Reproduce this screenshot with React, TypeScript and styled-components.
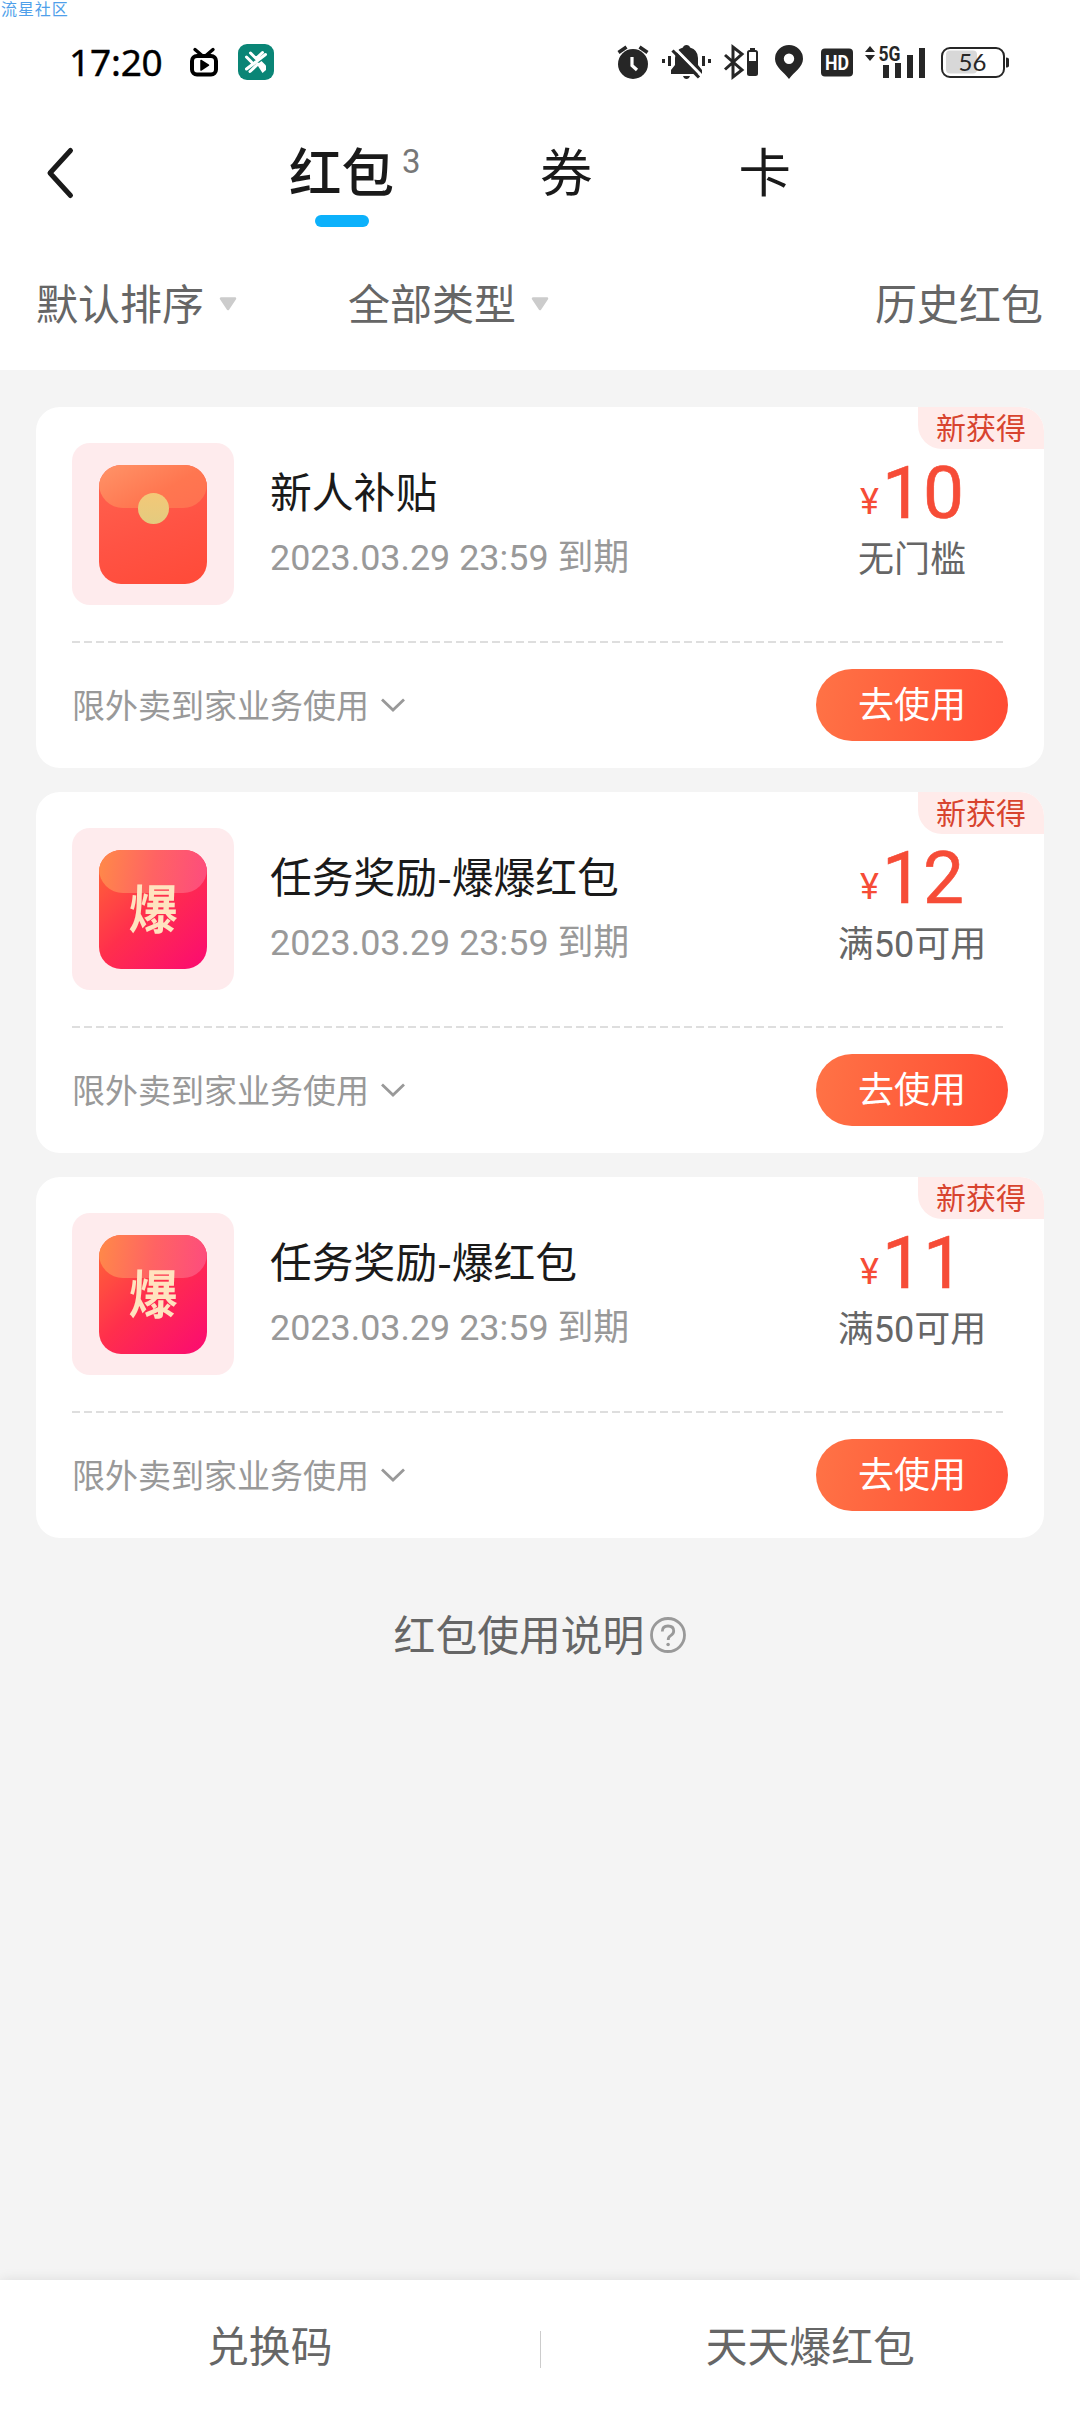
import React from 'react';
import styled, { createGlobalStyle } from 'styled-components';

const CJK = "'Noto Sans CJK SC', sans-serif";
const MIXED = "Roboto, 'Noto Sans CJK SC', sans-serif";

const GlobalStyle = createGlobalStyle`
  * { box-sizing: border-box; }
  body { margin: 0; background: #f4f4f4; font-family: ${CJK}; }
  svg { display: block; flex: none; overflow: visible; }
`;

const Screen = styled.div`
  position: relative;
  display: flex;
  flex-direction: column;
  width: 1080px;
  height: 2412px;
  background: #f4f4f4;
`;

const Watermark = styled.span`
  position: absolute;
  top: 0;
  left: 1px;
  font-size: 16px;
  line-height: 16px;
  letter-spacing: 0.9px;
  color: #4f9fea;
`;

const Header = styled.header`
  height: 370px;
  background: #fff;
`;

const StatusBar = styled.div`
  display: flex;
  align-items: center;
  justify-content: space-between;
  height: 124px;
  padding: 0 71px 0 69px;
`;

const StatusLeft = styled.div`
  display: flex;
  align-items: center;
`;

const Clock = styled.span`
  width: 121px;
  font: 37px/40px 'Noto Sans', sans-serif;
  letter-spacing: -0.2px;
  -webkit-text-stroke: 0.4px #000;
  color: #000;
`;

const AppIcons = styled.div`
  display: flex;
  align-items: center;
  gap: 20px;
`;

const StatusRight = styled.div`
  display: flex;
  align-items: center;
  color: #262626;
`;

const StatusIcon = styled.svg<{ $gap: number }>`
  margin-left: ${(p) => p.$gap}px;
`;

const Nav = styled.nav`
  display: flex;
  height: 114px;
  padding: 18px 0 0 47px;
`;

const Back = styled.svg`
  margin: 6px 216px 0 0;
`;

const Tabs = styled.div`
  display: flex;
  gap: 146px;
`;

const Tab = styled.div<{ $active?: boolean }>`
  position: relative;
  display: flex;
  flex-direction: column;
  align-items: center;
  font-size: 52.5px;
  font-weight: ${(p) => (p.$active ? 500 : 400)};
  line-height: 54px;
  color: #1a1a1a;
`;

const TabBar = styled.i`
  width: 54px;
  height: 12px;
  margin-top: 19px;
  border-radius: 6px;
  background: #0cb1fb;
`;

const TabCount = styled.sup`
  position: absolute;
  left: 113px;
  top: 0;
  font: 33px/40px Roboto, sans-serif;
  color: #777;
`;

const Filters = styled.div`
  display: flex;
  align-items: center;
  height: 132px;
  padding: 0 37px 0 36px;
  font-size: 42px;
  line-height: 60px;
  color: #666;
`;

const Filter = styled.div`
  display: flex;
  align-items: center;
  gap: 15px;
  width: 312px;
`;

const Label = styled.span`
  padding-bottom: 4px;
`;

const History = styled.div`
  margin-left: auto;
  padding-bottom: 4px;
`;

const List = styled.main`
  display: flex;
  flex: 1;
  flex-direction: column;
  gap: 24px;
  padding: 37px 36px 0;
`;

const Card = styled.section`
  position: relative;
  height: 361px;
  padding: 36px;
  border-radius: 24px;
  background: #fff;
`;

const NewBadge = styled.span`
  position: absolute;
  top: 0;
  right: 0;
  width: 126px;
  height: 42px;
  border-radius: 0 24px 0 24px;
  background: #ffebea;
  color: #d8442f;
  font-size: 30px;
  line-height: 39px;
  text-align: center;
`;

const CardTop = styled.div`
  display: flex;
  height: 200px;
  margin-right: 5px;
  padding-bottom: 35px;
  background: repeating-linear-gradient(90deg, #dedede 0 8px, transparent 8px 12px) left bottom / 100% 2px no-repeat;
`;

const Thumb = styled.div`
  display: flex;
  align-items: center;
  justify-content: center;
  width: 162px;
  height: 162px;
  border-radius: 18px;
  background: #feebed;
`;

const Packet = styled.div<{ $burst?: boolean }>`
  position: relative;
  display: flex;
  align-items: center;
  justify-content: center;
  width: 108px;
  height: 119px;
  border-radius: 22px;
  overflow: hidden;
  background: ${(p) =>
    p.$burst
      ? 'linear-gradient(135deg, #ff6a35 0%, #ff2f4c 48%, #fb0a72 100%)'
      : 'linear-gradient(160deg, #ff6450 0%, #ff5344 55%, #ff4a38 100%)'};
`;

const Flap = styled.i<{ $burst?: boolean }>`
  position: absolute;
  inset: 0 0 auto;
  height: 43px;
  border-radius: 0 0 24px 24px;
  background: ${(p) =>
    p.$burst
      ? 'linear-gradient(100deg, #ff8a48 0%, #ff6363 50%, #fd4b7e 100%)'
      : 'linear-gradient(150deg, #ff9468 0%, #ff7650 60%, #ff7050 100%)'};
`;

const Seal = styled.i`
  position: absolute;
  top: 28px;
  left: 39px;
  width: 31px;
  height: 31px;
  border-radius: 50%;
  background: linear-gradient(#f4c877, #e3cb7f);
`;

const BurstMark = styled.span`
  position: relative;
  padding-bottom: 5px;
  font-size: 53px;
  font-weight: 700;
  line-height: 53px;
  color: #ffe3bf;
  transform: scaleX(0.92) skewX(-2deg);
`;

const Info = styled.div`
  display: flex;
  flex: 1;
  flex-direction: column;
  padding: 17px 0 0 36px;
`;

const Title = styled.h2`
  margin: 0;
  font-size: 41.8px;
  font-weight: 400;
  line-height: 60px;
  color: #1a1a1a;
`;

const Expiry = styled.p`
  margin: 11px 0 0;
  font: 35.9px/54px ${MIXED};
  color: #999;
`;

const Value = styled.div`
  display: flex;
  flex-direction: column;
  align-items: center;
  width: 192px;
  margin-right: -5px;
`;

const Amount = styled.div`
  display: flex;
  gap: 3px;
  height: 93px;
  font-family: Roboto, sans-serif;
  color: #f64c37;
`;

const Currency = styled.span`
  padding-top: 36px;
  font-size: 36px;
  line-height: 46px;
`;

const Figure = styled.strong`
  padding-top: 5px;
  font-size: 73px;
  font-weight: 400;
  line-height: 90px;
  -webkit-text-stroke: 0.6px #f64c37;
`;

const Threshold = styled.span`
  font: 36px/48px ${MIXED};
  color: #666;
`;

const CardBottom = styled.div`
  display: flex;
  align-items: center;
  justify-content: space-between;
  height: 124px;
`;

const Scope = styled.div`
  display: flex;
  align-items: center;
  gap: 11px;
  padding-bottom: 2px;
  font-size: 33px;
  line-height: 48px;
  color: #999;
`;

const UseButton = styled.button`
  width: 192px;
  height: 72px;
  padding: 0 0 7px;
  border: 0;
  border-radius: 36px;
  background: linear-gradient(100deg, #ff7346, #ff4b33);
  color: #fff;
  font: 36px/60px ${CJK};
`;

const Help = styled.div`
  display: flex;
  align-items: center;
  justify-content: center;
  gap: 6px;
  margin-top: 41px;
  font-size: 41.8px;
  line-height: 60px;
  color: #666;
`;

const Footer = styled.footer`
  display: flex;
  align-items: center;
  height: 132px;
  background: #fff;
  box-shadow: 0 0 12px rgba(0, 0, 0, 0.1);
`;

const FooterItem = styled.div`
  flex: 1;
  padding-bottom: 5px;
  font-size: 41.8px;
  line-height: 60px;
  text-align: center;
  color: #666;
`;

const Divider = styled.i`
  width: 1px;
  height: 37px;
  margin: 6px 0 0;
  background: #ccc;
`;

const coupons = [
  { title: '新人补贴', amount: '10', threshold: '无门槛', burst: false },
  { title: '任务奖励-爆爆红包', amount: '12', threshold: '满50可用', burst: true },
  { title: '任务奖励-爆红包', amount: '11', threshold: '满50可用', burst: true },
];

const Caret = () => (
  <svg width="18" height="14" viewBox="0 0 18 14">
    <path d="M2 1.5h14L9 12z" fill="#ccc" stroke="#ccc" strokeWidth="2.5" strokeLinejoin="round" />
  </svg>
);

const StatusIcons = () => (
  <StatusRight>
    <StatusIcon $gap={0} width="32" height="34" viewBox="0 0 32 34">
      <circle cx="16" cy="19" r="15" fill="currentColor" />
      <path d="M1.5 7.5 9.5 2M30.500 7.500 22.500 2" stroke="currentColor" strokeWidth="3.600" />
      <path d="M15 12v8.500l5 4.500" stroke="#fff" strokeWidth="3.200" fill="none" />
    </StatusIcon>
    <StatusIcon $gap={13} width="49" height="34" viewBox="0 0 49 34">
      <path d="M9 29v-4l4-5v-7q0-8 8-10.500Q21.500 0 24.500 0t3.500 2.500q8 2.500 8 10.500v7l4 5v4zM21 31h7q-1 3-3.500 3T21 31z" fill="currentColor" />
      <path d="M12 2.500 39 30" stroke="#fff" strokeWidth="3" />
      <path d="M10.500 5.500 37 32.500" stroke="currentColor" strokeWidth="3.200" />
      <path d="M1.500 14v4M7.500 11v10M41.500 11v10M47.500 14v4" stroke="currentColor" strokeWidth="3" />
    </StatusIcon>
    <StatusIcon $gap={13} width="34" height="34" viewBox="0 0 34 34">
      <path d="M1 10 18 25 9 32V2l9 7L1 24.500" stroke="currentColor" strokeWidth="3" fill="none" />
      <path d="M26 3h5v2h-5z" fill="currentColor" />
      <rect x="24" y="6" width="9" height="24" rx="1.500" stroke="currentColor" strokeWidth="2" fill="none" />
      <path d="M24 16h9v14h-9z" fill="currentColor" />
    </StatusIcon>
    <StatusIcon $gap={17} width="28" height="34" viewBox="0 0 28 34">
      <path fillRule="evenodd" fill="currentColor" d="M14 0a14 14 0 0 1 14 14c0 8-9 13-14 20C9 27 0 22 0 14A14 14 0 0 1 14 0zm0 8.500a5.200 5.200 0 1 0 0 10.400 5.200 5.200 0 0 0 0-10.400z" />
    </StatusIcon>
    <StatusIcon $gap={18} width="32" height="34" viewBox="0 0 32 34">
      <rect y="3.500" width="32" height="28" rx="4" fill="currentColor" />
      <text x="16" y="25" textAnchor="middle" textLength="24" lengthAdjust="spacingAndGlyphs" fontFamily="Roboto" fontWeight="700" fontSize="21" fill="#fff">HD</text>
    </StatusIcon>
    <StatusIcon $gap={12} width="60" height="34" viewBox="0 0 60 34">
      <path d="M0 7 5 1l5 6zM0 10h10l-5 6z" fill="currentColor" />
      <path d="M18 20h6v13h-6zM30 18h6v15h-6zM42 10h6v23h-6zM54 3h6v30h-6z" fill="currentColor" />
      <text x="13.500" y="15.500" textLength="22" lengthAdjust="spacingAndGlyphs" fontFamily="Roboto" fontWeight="700" fontSize="20" fill="currentColor">5G</text>
    </StatusIcon>
    <StatusIcon $gap={16} width="68" height="34" viewBox="0 0 68 34">
      <rect x="5" y="5.500" width="31" height="23" rx="4" fill="#d8d8d8" />
      <rect x="1" y="3" width="62" height="29" rx="8" fill="none" stroke="currentColor" strokeWidth="2" />
      <path d="M65 12.500q3 0 3 2v6q0 2-3 2z" fill="currentColor" />
      <text x="31.500" y="26" textAnchor="middle" fontFamily="Lato" fontSize="24" fill="currentColor">56</text>
    </StatusIcon>
  </StatusRight>
);

const CouponCard = ({ title, amount, threshold, burst }: (typeof coupons)[number]) => (
  <Card>
    <NewBadge>新获得</NewBadge>
    <CardTop>
      <Thumb>
        <Packet $burst={burst}>
          <Flap $burst={burst} />
          {burst ? <BurstMark>爆</BurstMark> : <Seal />}
        </Packet>
      </Thumb>
      <Info>
        <Title>{title}</Title>
        <Expiry>2023.03.29 23:59 到期</Expiry>
      </Info>
      <Value>
        <Amount>
          <Currency>¥</Currency>
          <Figure>{amount}</Figure>
        </Amount>
        <Threshold>{threshold}</Threshold>
      </Value>
    </CardTop>
    <CardBottom>
      <Scope>
        限外卖到家业务使用
        <svg width="26" height="16" viewBox="0 0 26 16">
          <path d="M2 3.500 13 14 24 3.500" fill="none" stroke="#999" strokeWidth="2.800" />
        </svg>
      </Scope>
      <UseButton>去使用</UseButton>
    </CardBottom>
  </Card>
);

export default function App() {
  return (
    <Screen>
      <GlobalStyle />
      <Header>
        <StatusBar>
          <StatusLeft>
            <Clock>17:20</Clock>
            <AppIcons>
              <svg width="28" height="29" viewBox="0 0 28 29">
                <path d="M5 1.500 12 7.500M23 1.500 16 7.500" stroke="#000" strokeWidth="3.400" strokeLinecap="round" />
                <rect x="2" y="8" width="24" height="18.500" rx="5" fill="none" stroke="#000" strokeWidth="4" />
                <path d="M11 12.500 18.500 17.200 11 22z" fill="#000" stroke="#000" strokeWidth="1.500" strokeLinejoin="round" />
              </svg>
              <svg width="36" height="36" viewBox="0 0 36 36">
                <rect width="36" height="36" rx="9" fill="#0a8576" />
                <path d="M12.500 9 18 14.500 24.500 8.500M8.500 13l5 5M8.500 25 27.500 10.500M12 27.500 20 20" stroke="#fff" strokeWidth="3" strokeLinecap="round" strokeLinejoin="round" fill="none" />
                <path d="m19 20.500 4.500-3.500 4.500 4.500v4.500l-3.500 3z" fill="#fff" />
              </svg>
            </AppIcons>
          </StatusLeft>
          <StatusIcons />
        </StatusBar>
        <Nav>
          <Back width="26" height="50" viewBox="0 0 26 50">
            <path d="M23.500 2.500 3 25 23.500 47.500" fill="none" stroke="#1a1a1a" strokeWidth="5" strokeLinecap="round" strokeLinejoin="round" />
          </Back>
          <Tabs>
            <Tab $active>
              红包
              <TabCount>3</TabCount>
              <TabBar />
            </Tab>
            <Tab>券</Tab>
            <Tab>卡</Tab>
          </Tabs>
        </Nav>
        <Filters>
          <Filter>
            <Label>默认排序</Label>
            <Caret />
          </Filter>
          <Filter>
            <Label>全部类型</Label>
            <Caret />
          </Filter>
          <History>历史红包</History>
        </Filters>
      </Header>
      <List>
        {coupons.map((c) => (
          <CouponCard key={c.title} {...c} />
        ))}
        <Help>
          <Label>红包使用说明</Label>
          <svg width="36" height="36" viewBox="0 0 36 36" fill="none" stroke="#999" strokeWidth="2.800">
            <circle cx="18" cy="18" r="16.500" />
            <path d="M12.300 14.500q0-5.500 5.700-5.500t5.700 5q0 2.800-3 4.600-2.500 1.500-2.500 4.400" />
            <circle cx="18.100" cy="27.500" r="1.800" fill="#999" stroke="none" />
          </svg>
        </Help>
      </List>
      <Footer>
        <FooterItem>兑换码</FooterItem>
        <Divider />
        <FooterItem>天天爆红包</FooterItem>
      </Footer>
      <Watermark>流星社区</Watermark>
    </Screen>
  );
}
